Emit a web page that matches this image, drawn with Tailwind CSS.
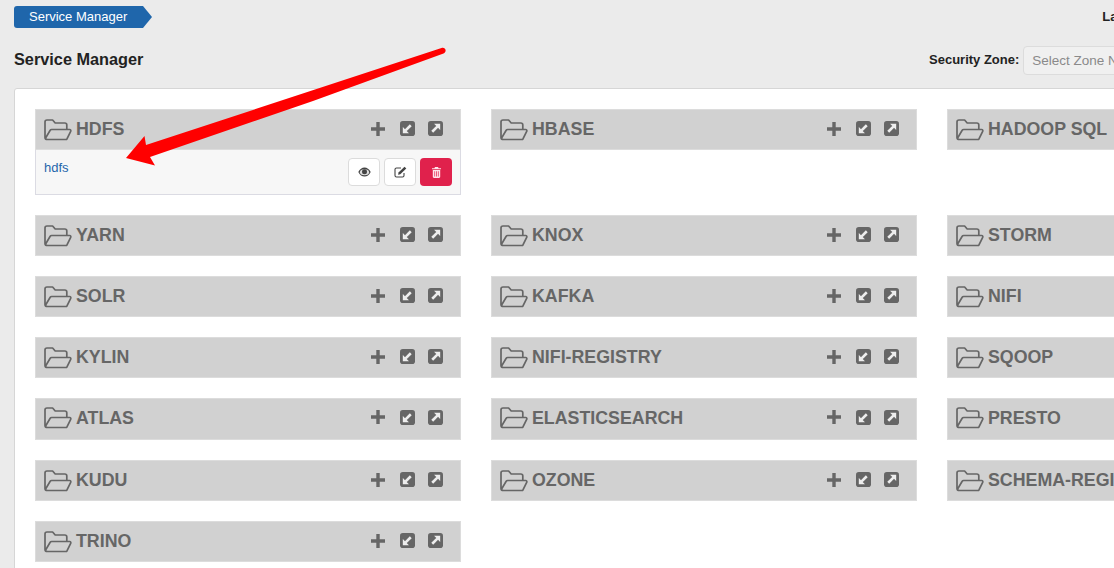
<!DOCTYPE html>
<html lang="en">
<head>
<meta charset="utf-8"/>
<title>Service Manager</title>
<script src="https://cdn.jsdelivr.net/npm/@tailwindcss/browser@4"></script>
</head>
<body class="relative h-[568px] w-[1114px] overflow-hidden bg-[#ebebeb] font-['Liberation_Sans',Arial,sans-serif] text-[#222]">

<svg class="hidden">
  <symbol id="folder" viewBox="0 0 28 22">
    <path d="M3.500 20.500h18.200c.6 0 1.100-.3 1.400-.8l3.600-7.400c.4-.8-.1-1.800-1-1.800H7.600c-.6 0-1.100.3-1.400.8L1.600 19M1 18.500V3c0-1.100.9-2 2-2h5.600l2.600 3h9.600c1.100 0 2 .9 2 2v4.500M1 18.500c0 1.100 1.200 2 2.500 2" fill="none" stroke="#666" stroke-width="1.700" stroke-linecap="round" stroke-linejoin="round"/>
  </symbol>
  <symbol id="plus" viewBox="0 0 14 14">
    <path d="M5.300 0h3.400v5.300H14v3.400H8.700V14H5.300V8.700H0V5.300h5.300z" fill="#666"/>
  </symbol>
  <symbol id="compress" viewBox="0 0 16 16">
    <rect width="16" height="16" rx="3" fill="#666"/>
    <g transform="rotate(180 8 8)">
      <path d="M13 3v6.500L6.500 3z" fill="#eee"/>
      <path d="M10 6l-5.500 5.500" stroke="#eee" stroke-width="2.800"/>
    </g>
  </symbol>
  <symbol id="expand" viewBox="0 0 16 16">
    <rect width="16" height="16" rx="3" fill="#666"/>
    <path d="M13 3v6.500L6.500 3z" fill="#eee"/>
    <path d="M10 6l-5.500 5.500" stroke="#eee" stroke-width="2.800"/>
  </symbol>
</svg>

<header class="flex h-[88px] flex-col pl-[14px]">
  <div class="mt-[6px] flex items-center">
    <a class="flex h-[22px] w-[129px] items-center rounded-l-[3px] bg-[#1f66ab] pl-[15px] text-[13px] text-white">Service Manager</a>
    <span class="h-0 w-0 border-y-[11px] border-l-[9px] border-y-transparent border-l-[#1f66ab]"></span>
    <span class="ml-auto -mr-[15px] text-[13px] font-bold">Last</span>
  </div>
  <div class="mt-[17px] flex items-start">
    <h1 class="text-[16.3px] font-bold leading-[28px] text-[#222]">Service Manager</h1>
    <div class="ml-auto flex w-[185px] shrink-0 items-start">
      <label class="mt-[1px] mr-[4px] shrink-0 text-[13px] font-bold leading-[28px]">Security Zone:</label>
      <div class="mt-[1px] flex h-[29px] w-[200px] shrink-0 items-center rounded-[4px] border border-[#dcdcdc] bg-[#f0f0f0] pt-[2px] pl-[8px] text-[13.5px] whitespace-nowrap text-[#8a8a8a]">Select Zone Name</div>
    </div>
  </div>
</header>

<main class="ml-[14px] h-[500px] w-[1200px] rounded-[3px] border border-[#d6d6d6] bg-white pt-[20px] pl-[20px]">
  <div class="grid grid-cols-[426px_426px_426px] gap-x-[30px]">

    <div class="h-[106px]">
      <div class="flex h-[41px] items-center border border-[#dcdcdc] bg-[#d1d1d1] pl-[8px] pr-[17px]">
        <svg class="mr-[4px] h-[22px] w-[28px]"><use href="#folder"/></svg>
        <span class="text-[17.8px] font-bold text-[#666]">HDFS</span>
        <div class="mb-[2px] ml-auto flex items-center gap-[13px]">
          <svg class="mr-[2px] h-[14px] w-[14px]"><use href="#plus"/></svg>
          <svg class="h-[15px] w-[15px]"><use href="#compress"/></svg>
          <svg class="h-[15px] w-[15px]"><use href="#expand"/></svg>
        </div>
      </div>
      <div class="flex h-[45px] justify-between border border-t-0 border-[#dbdbe3] bg-[#f7f7f7] px-[8px]">
        <a class="mt-[8px] text-[13px] text-[#1f66ab]">hdfs</a>
        <div class="mt-[8px] flex gap-[4px]">
          <button class="flex h-[28px] w-[32px] items-center justify-center rounded-[4px] border border-[#dcdcdc] bg-white">
            <svg class="h-[10px] w-[13px]" viewBox="0 0 13 10"><path d="M.3 5C1.800 2 4 .5 6.500.5S11.200 2 12.700 5c-1.500 3-3.700 4.500-6.200 4.500S1.800 8 .3 5z" fill="#444"/><ellipse cx="6.500" cy="5.200" rx="4.600" ry="3" fill="#ddd"/><circle cx="6.500" cy="4.800" r="2.500" fill="#444"/></svg>
          </button>
          <button class="flex h-[28px] w-[32px] items-center justify-center rounded-[4px] border border-[#dcdcdc] bg-white">
            <svg class="h-[12px] w-[13px]" viewBox="0 0 13 12"><path d="M10 7v2.500c0 .8-.7 1.500-1.500 1.500h-6C1.700 11 1 10.300 1 9.500v-6C1 2.700 1.700 2 2.500 2H7" fill="none" stroke="#444" stroke-width="1.100"/><path d="M4.500 6.500 10.500.7l1.800 1.800-6 5.800-2.200.4z" fill="#444"/></svg>
          </button>
          <button class="flex h-[28px] w-[32px] items-center justify-center rounded-[4px] bg-[#e0214c]">
            <svg class="h-[11px] w-[9px]" viewBox="0 0 9 11"><path d="M3 0h3l.6 1.200H9v1.100H0V1.200h2.400zM.8 3h7.400v6.800c0 .7-.5 1.200-1.200 1.200H2c-.7 0-1.200-.5-1.200-1.200zM2.400 4.300v5.200h.7V4.300zm1.750 0v5.200h.7V4.300zm1.750 0v5.200h.7V4.300z" fill="#ffe4ea" fill-rule="evenodd"/></svg>
          </button>
        </div>
      </div>
    </div>

    <div class="h-[106px]">
      <div class="flex h-[41px] items-center border border-[#dcdcdc] bg-[#d1d1d1] pl-[8px] pr-[17px]">
        <svg class="mr-[4px] h-[22px] w-[28px]"><use href="#folder"/></svg>
        <span class="text-[17.8px] font-bold text-[#666]">HBASE</span>
        <div class="mb-[2px] ml-auto flex items-center gap-[13px]">
          <svg class="mr-[2px] h-[14px] w-[14px]"><use href="#plus"/></svg>
          <svg class="h-[15px] w-[15px]"><use href="#compress"/></svg>
          <svg class="h-[15px] w-[15px]"><use href="#expand"/></svg>
        </div>
      </div>
    </div>

    <div class="h-[106px]">
      <div class="flex h-[41px] items-center border border-[#dcdcdc] bg-[#d1d1d1] pl-[8px] pr-[17px]">
        <svg class="mr-[4px] h-[22px] w-[28px]"><use href="#folder"/></svg>
        <span class="text-[17.8px] font-bold text-[#666]">HADOOP SQL</span>
      </div>
    </div>

    <div class="h-[61px]"><div class="flex h-[41px] items-center border border-[#dcdcdc] bg-[#d1d1d1] pl-[8px] pr-[17px]"><svg class="mr-[4px] h-[22px] w-[28px]"><use href="#folder"/></svg><span class="text-[17.8px] font-bold text-[#666]">YARN</span><div class="mb-[2px] ml-auto flex items-center gap-[13px]"><svg class="mr-[2px] h-[14px] w-[14px]"><use href="#plus"/></svg><svg class="h-[15px] w-[15px]"><use href="#compress"/></svg><svg class="h-[15px] w-[15px]"><use href="#expand"/></svg></div></div></div>
    <div class="h-[61px]"><div class="flex h-[41px] items-center border border-[#dcdcdc] bg-[#d1d1d1] pl-[8px] pr-[17px]"><svg class="mr-[4px] h-[22px] w-[28px]"><use href="#folder"/></svg><span class="text-[17.8px] font-bold text-[#666]">KNOX</span><div class="mb-[2px] ml-auto flex items-center gap-[13px]"><svg class="mr-[2px] h-[14px] w-[14px]"><use href="#plus"/></svg><svg class="h-[15px] w-[15px]"><use href="#compress"/></svg><svg class="h-[15px] w-[15px]"><use href="#expand"/></svg></div></div></div>
    <div class="h-[61px]"><div class="flex h-[41px] items-center border border-[#dcdcdc] bg-[#d1d1d1] pl-[8px] pr-[17px]"><svg class="mr-[4px] h-[22px] w-[28px]"><use href="#folder"/></svg><span class="text-[17.8px] font-bold text-[#666]">STORM</span></div></div>

    <div class="h-[61px]"><div class="flex h-[41px] items-center border border-[#dcdcdc] bg-[#d1d1d1] pl-[8px] pr-[17px]"><svg class="mr-[4px] h-[22px] w-[28px]"><use href="#folder"/></svg><span class="text-[17.8px] font-bold text-[#666]">SOLR</span><div class="mb-[2px] ml-auto flex items-center gap-[13px]"><svg class="mr-[2px] h-[14px] w-[14px]"><use href="#plus"/></svg><svg class="h-[15px] w-[15px]"><use href="#compress"/></svg><svg class="h-[15px] w-[15px]"><use href="#expand"/></svg></div></div></div>
    <div class="h-[61px]"><div class="flex h-[41px] items-center border border-[#dcdcdc] bg-[#d1d1d1] pl-[8px] pr-[17px]"><svg class="mr-[4px] h-[22px] w-[28px]"><use href="#folder"/></svg><span class="text-[17.8px] font-bold text-[#666]">KAFKA</span><div class="mb-[2px] ml-auto flex items-center gap-[13px]"><svg class="mr-[2px] h-[14px] w-[14px]"><use href="#plus"/></svg><svg class="h-[15px] w-[15px]"><use href="#compress"/></svg><svg class="h-[15px] w-[15px]"><use href="#expand"/></svg></div></div></div>
    <div class="h-[61px]"><div class="flex h-[41px] items-center border border-[#dcdcdc] bg-[#d1d1d1] pl-[8px] pr-[17px]"><svg class="mr-[4px] h-[22px] w-[28px]"><use href="#folder"/></svg><span class="text-[17.8px] font-bold text-[#666]">NIFI</span></div></div>

    <div class="h-[61px]"><div class="flex h-[41px] items-center border border-[#dcdcdc] bg-[#d1d1d1] pl-[8px] pr-[17px]"><svg class="mr-[4px] h-[22px] w-[28px]"><use href="#folder"/></svg><span class="text-[17.8px] font-bold text-[#666]">KYLIN</span><div class="mb-[2px] ml-auto flex items-center gap-[13px]"><svg class="mr-[2px] h-[14px] w-[14px]"><use href="#plus"/></svg><svg class="h-[15px] w-[15px]"><use href="#compress"/></svg><svg class="h-[15px] w-[15px]"><use href="#expand"/></svg></div></div></div>
    <div class="h-[61px]"><div class="flex h-[41px] items-center border border-[#dcdcdc] bg-[#d1d1d1] pl-[8px] pr-[17px]"><svg class="mr-[4px] h-[22px] w-[28px]"><use href="#folder"/></svg><span class="text-[17.8px] font-bold text-[#666]">NIFI-REGISTRY</span><div class="mb-[2px] ml-auto flex items-center gap-[13px]"><svg class="mr-[2px] h-[14px] w-[14px]"><use href="#plus"/></svg><svg class="h-[15px] w-[15px]"><use href="#compress"/></svg><svg class="h-[15px] w-[15px]"><use href="#expand"/></svg></div></div></div>
    <div class="h-[61px]"><div class="flex h-[41px] items-center border border-[#dcdcdc] bg-[#d1d1d1] pl-[8px] pr-[17px]"><svg class="mr-[4px] h-[22px] w-[28px]"><use href="#folder"/></svg><span class="text-[17.8px] font-bold text-[#666]">SQOOP</span></div></div>

    <div class="h-[62px]"><div class="flex h-[42px] items-center border border-[#dcdcdc] bg-[#d1d1d1] pb-[2px] pl-[8px] pr-[17px]"><svg class="mr-[4px] h-[22px] w-[28px]"><use href="#folder"/></svg><span class="text-[17.8px] font-bold text-[#666]">ATLAS</span><div class="mb-[2px] ml-auto flex items-center gap-[13px]"><svg class="mr-[2px] h-[14px] w-[14px]"><use href="#plus"/></svg><svg class="h-[15px] w-[15px]"><use href="#compress"/></svg><svg class="h-[15px] w-[15px]"><use href="#expand"/></svg></div></div></div>
    <div class="h-[62px]"><div class="flex h-[42px] items-center border border-[#dcdcdc] bg-[#d1d1d1] pb-[2px] pl-[8px] pr-[17px]"><svg class="mr-[4px] h-[22px] w-[28px]"><use href="#folder"/></svg><span class="text-[17.8px] font-bold text-[#666]">ELASTICSEARCH</span><div class="mb-[2px] ml-auto flex items-center gap-[13px]"><svg class="mr-[2px] h-[14px] w-[14px]"><use href="#plus"/></svg><svg class="h-[15px] w-[15px]"><use href="#compress"/></svg><svg class="h-[15px] w-[15px]"><use href="#expand"/></svg></div></div></div>
    <div class="h-[62px]"><div class="flex h-[42px] items-center border border-[#dcdcdc] bg-[#d1d1d1] pb-[2px] pl-[8px] pr-[17px]"><svg class="mr-[4px] h-[22px] w-[28px]"><use href="#folder"/></svg><span class="text-[17.8px] font-bold text-[#666]">PRESTO</span></div></div>

    <div class="h-[61px]"><div class="flex h-[41px] items-center border border-[#dcdcdc] bg-[#d1d1d1] pl-[8px] pr-[17px]"><svg class="mr-[4px] h-[22px] w-[28px]"><use href="#folder"/></svg><span class="text-[17.8px] font-bold text-[#666]">KUDU</span><div class="mb-[2px] ml-auto flex items-center gap-[13px]"><svg class="mr-[2px] h-[14px] w-[14px]"><use href="#plus"/></svg><svg class="h-[15px] w-[15px]"><use href="#compress"/></svg><svg class="h-[15px] w-[15px]"><use href="#expand"/></svg></div></div></div>
    <div class="h-[61px]"><div class="flex h-[41px] items-center border border-[#dcdcdc] bg-[#d1d1d1] pl-[8px] pr-[17px]"><svg class="mr-[4px] h-[22px] w-[28px]"><use href="#folder"/></svg><span class="text-[17.8px] font-bold text-[#666]">OZONE</span><div class="mb-[2px] ml-auto flex items-center gap-[13px]"><svg class="mr-[2px] h-[14px] w-[14px]"><use href="#plus"/></svg><svg class="h-[15px] w-[15px]"><use href="#compress"/></svg><svg class="h-[15px] w-[15px]"><use href="#expand"/></svg></div></div></div>
    <div class="h-[61px]"><div class="flex h-[41px] items-center border border-[#dcdcdc] bg-[#d1d1d1] pl-[8px] pr-[17px]"><svg class="mr-[4px] h-[22px] w-[28px]"><use href="#folder"/></svg><span class="text-[17.8px] font-bold whitespace-nowrap text-[#666]">SCHEMA-REGISTRY</span></div></div>

    <div class="h-[61px]"><div class="flex h-[41px] items-center border border-[#dcdcdc] bg-[#d1d1d1] pl-[8px] pr-[17px]"><svg class="mr-[4px] h-[22px] w-[28px]"><use href="#folder"/></svg><span class="text-[17.8px] font-bold text-[#666]">TRINO</span><div class="mb-[2px] ml-auto flex items-center gap-[13px]"><svg class="mr-[2px] h-[14px] w-[14px]"><use href="#plus"/></svg><svg class="h-[15px] w-[15px]"><use href="#compress"/></svg><svg class="h-[15px] w-[15px]"><use href="#expand"/></svg></div></div></div>
  </div>
</main>

<!-- red annotation arrow on top of the screenshot -->
<svg class="pointer-events-none absolute top-0 left-0" width="1114" height="568" viewBox="0 0 1114 568">
  <path d="M441.500 48c2-.7 4 .3 4.100 2.300.1 1.500-.7 2.700-2.100 3.200L313 101 150 157l5 8.500-29-7.500 18.500-22 1.500 9z" fill="#ff0000"/>
</svg>
</body>
</html>
